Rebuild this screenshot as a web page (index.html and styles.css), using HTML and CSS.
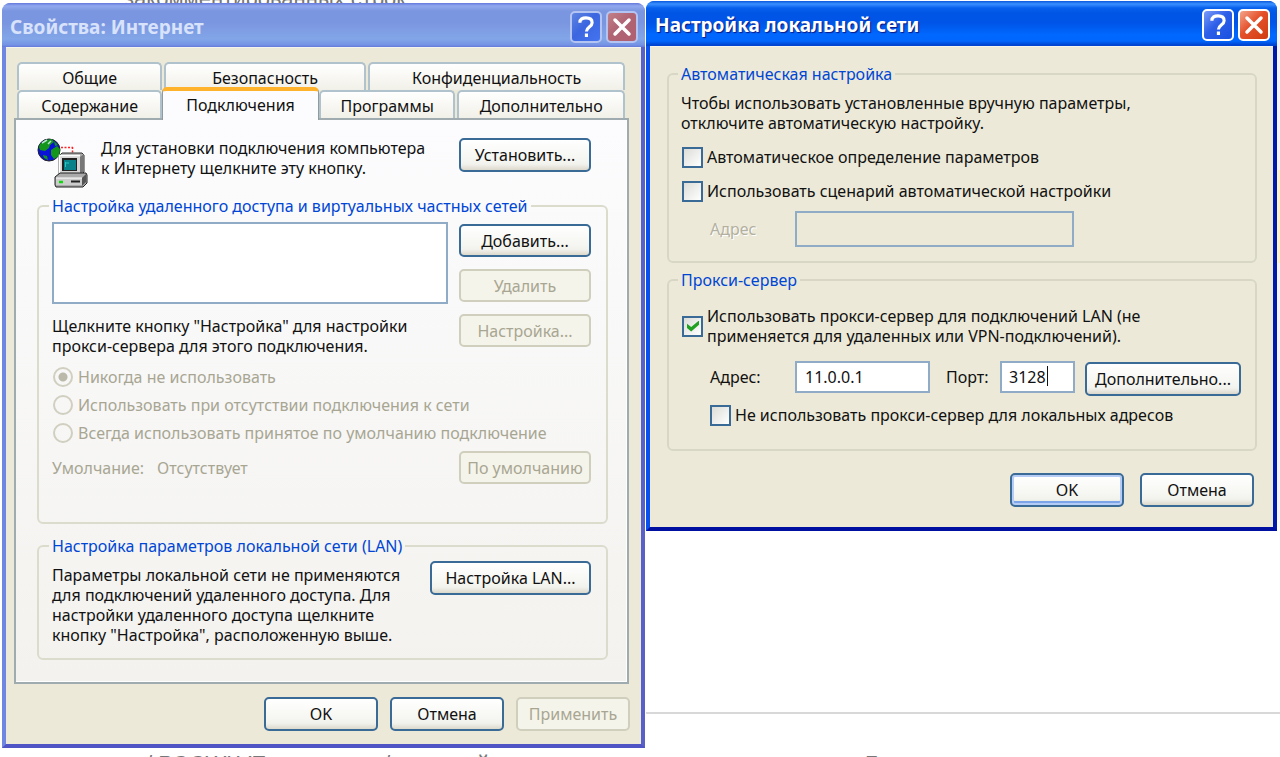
FILE: index.html
```html
<!DOCTYPE html>
<html lang="ru">
<head>
<meta charset="utf-8">
<title>Свойства: Интернет</title>
<link rel="stylesheet" href="styles.css">
</head>
<body>
<div class="doc" aria-hidden="true">
  <p class="doc-top">закомментированных строк</p>
  <p class="doc-bottom"><span class="doc-a">/ РОСWLVE</span><span class="doc-b">/</span><span class="doc-c">й</span><span class="doc-d">Б</span></p>
  <div class="doc-edge"></div>
</div>
<main class="desktop">
  <section class="window inactive" aria-label="Свойства: Интернет">
    <header class="titlebar">
      <h1 class="title">Свойства: Интернет</h1>
      <button class="cap help" type="button" aria-label="Справка"><svg viewBox="0 0 32 32"><path d="M9 11C9 7 12 5.500 16 5.500s7 1.500 7 5.500c0 5-6.500 5-6.500 10M16.500 23.500v4" fill="none" stroke="#fff" stroke-width="3.600"/></svg></button>
      <button class="cap close" type="button" aria-label="Закрыть"><svg viewBox="0 0 32 32"><path d="M8 8l16 16M24 8l-16 16" fill="none" stroke="#fff" stroke-width="4" stroke-linecap="round"/></svg></button>
    </header>
    <div class="body props">
      <div class="tabs" role="tablist">
        <div class="tab-row">
          <button class="tab t-general" role="tab" type="button">Общие</button>
          <button class="tab t-security" role="tab" type="button">Безопасность</button>
          <button class="tab t-privacy" role="tab" type="button">Конфиденциальность</button>
        </div>
        <div class="tab-row">
          <button class="tab t-general" role="tab" type="button">Содержание</button>
          <button class="tab t-connect selected" role="tab" type="button" aria-selected="true">Подключения</button>
          <button class="tab t-programs" role="tab" type="button">Программы</button>
          <button class="tab t-advanced" role="tab" type="button">Дополнительно</button>
        </div>
      </div>
      <div class="panel" role="tabpanel">
        <div class="intro">
          <svg class="net-icon" viewBox="0 0 52 50" aria-hidden="true">
            <path d="M24 9.500h12M35.500 9v7" stroke="#f22" stroke-width="1.500" stroke-dasharray="2 1.500" fill="none"/>
            <circle cx="12" cy="12" r="11" fill="#0a12d8" stroke="#222" stroke-width="1"/>
            <path d="M3 6l5-4 7-1 2 3-4 3-1 3-4 3-5-1-1-3zM14 12l6-4 3 3-1 7-5 3-3-4zM6 17l4 1 1 4-4-2zM17 3l4 4-3 1z" fill="#14961d"/>
            <path d="M5 5l5-3M14 3l-3 3" stroke="#b6e4d0" stroke-width="1.500"/>
            <path d="M22 18l3-3h20l2 2v17l-4 4H22z" fill="#a9a9a9" stroke="#333"/>
            <path d="M43 19l4-3v17l-4 4z" fill="#777"/>
            <path d="M22 17.500h21v19H22z" fill="#d6d6d6"/>
            <path d="M22.500 37V17.500H43" fill="none" stroke="#fff" stroke-width="1.500"/>
            <path d="M25 20h15v13H25z" fill="#222"/>
            <path d="M27 22h12v10H27z" fill="#08828a"/>
            <path d="M28 25h4M28.500 24v5" stroke="#22c8c8" stroke-width="1"/>
            <path d="M18 39l5-4h26l1 2v8l-4 4H19l-1-2z" fill="#aaa" stroke="#222"/>
            <path d="M45 40l4-4v8l-4 4z" fill="#555"/>
            <path d="M19 40h26v7H19z" fill="#ccc"/>
            <path d="M19 40h26" stroke="#fff"/>
            <path d="M22 44h4" stroke="#12d812" stroke-width="2.500"/>
            <path d="M34 43.500h9" stroke="#222" stroke-width="2"/>
          </svg>
          <p>Для установки подключения компьютера<br>к Интернету щелкните эту кнопку.</p>
          <button class="btn" type="button">Установить...</button>
        </div>
        <fieldset class="group dial">
          <legend>Настройка удаленного доступа и виртуальных частных сетей</legend>
          <div class="split">
            <div class="stack">
              <div class="listbox" role="listbox" aria-label="Подключения" tabindex="0"></div>
              <p>Щелкните кнопку "Настройка" для настройки<br>прокси-сервера для этого подключения.</p>
            </div>
            <div class="stack side">
              <button class="btn" type="button">Добавить...</button>
              <button class="btn" type="button" disabled>Удалить</button>
              <button class="btn" type="button" disabled>Настройка...</button>
            </div>
          </div>
          <div class="radios">
            <label class="radio"><input type="radio" name="dial" checked disabled>Никогда не использовать</label>
            <label class="radio"><input type="radio" name="dial" disabled>Использовать при отсутствии подключения к сети</label>
            <label class="radio"><input type="radio" name="dial" disabled>Всегда использовать принятое по умолчанию подключение</label>
          </div>
          <div class="default-row">
            <span>Умолчание:</span><span class="default-value">Отсутствует</span>
            <button class="btn" type="button" disabled>По умолчанию</button>
          </div>
        </fieldset>
        <fieldset class="group lan">
          <legend>Настройка параметров локальной сети (LAN)</legend>
          <div class="lan-row">
            <p>Параметры локальной сети не применяются<br>для подключений удаленного доступа. Для<br>настройки удаленного доступа щелкните<br>кнопку "Настройка", расположенную выше.</p>
            <button class="btn wide" type="button">Настройка LAN...</button>
          </div>
        </fieldset>
      </div>
      <div class="actions">
        <button class="btn" type="button">OK</button>
        <button class="btn" type="button">Отмена</button>
        <button class="btn" type="button" disabled>Применить</button>
      </div>
    </div>
  </section>
  <div class="right">
    <section class="window active" aria-label="Настройка локальной сети">
      <header class="titlebar">
        <h2 class="title">Настройка локальной сети</h2>
        <button class="cap help" type="button" aria-label="Справка"><svg viewBox="0 0 32 32"><path d="M9 11C9 7 12 5.500 16 5.500s7 1.500 7 5.500c0 5-6.500 5-6.500 10M16.500 23.500v4" fill="none" stroke="#fff" stroke-width="3.600"/></svg></button>
        <button class="cap close" type="button" aria-label="Закрыть"><svg viewBox="0 0 32 32"><path d="M8 8l16 16M24 8l-16 16" fill="none" stroke="#fff" stroke-width="4" stroke-linecap="round"/></svg></button>
      </header>
      <div class="body network">
        <fieldset class="group auto">
          <legend>Автоматическая настройка</legend>
          <p>Чтобы использовать установленные вручную параметры,<br>отключите автоматическую настройку.</p>
          <label class="check"><input type="checkbox">Автоматическое определение параметров</label>
          <label class="check"><input type="checkbox">Использовать сценарий автоматической настройки</label>
          <div class="field-row">
            <label class="field-label off" for="script">Адрес</label>
            <input class="text script" id="script" type="text" disabled>
          </div>
        </fieldset>
        <fieldset class="group proxy">
          <legend>Прокси-сервер</legend>
          <label class="check"><input type="checkbox" checked><span>Использовать прокси-сервер для подключений LAN (не<br>применяется для удаленных или VPN-подключений).</span></label>
          <div class="field-row">
            <label class="field-label" for="addr">Адрес:</label>
            <input class="text addr" id="addr" type="text" value="11.0.0.1">
            <label class="port-label" for="port">Порт:</label>
            <span class="port-box"><input class="text port" id="port" type="text" value="3128"><i class="caret"></i></span>
            <button class="btn" type="button">Дополнительно...</button>
          </div>
          <label class="check local"><input type="checkbox">Не использовать прокси-сервер для локальных адресов</label>
        </fieldset>
        <div class="actions">
          <button class="btn default" type="button">OK</button>
          <button class="btn" type="button">Отмена</button>
        </div>
      </div>
    </section>
    <hr class="rule">
  </div>
</main>
</body>
</html>
```
FILE: styles.css
```css
* { box-sizing: border-box; }

body {
  margin: 0;
  background: #fff;
  color: #111;
  font: 16px/20px "Noto Sans", "DejaVu Sans Condensed", sans-serif;
  overflow-x: hidden;
}

p, h1, h2 { margin: 0; }
button, input { font: inherit; color: inherit; }

/* document page behind the windows */
.doc {
  position: absolute;
  inset: 0;
  z-index: -1;
  overflow: hidden;
  color: #777;
  font-family: "Liberation Sans", Arial, sans-serif;
  font-size: 22px;
}
.doc-top {
  position: absolute;
  top: -11px;
  left: 124px;
}
.doc-bottom {
  position: absolute;
  left: 146px;
  right: 0;
  bottom: -17px;
  height: 20px;
  display: flex;
}
.doc-a { flex: 0 0 238px; }
.doc-b { flex: 0 0 93px; }
.doc-c { flex: 0 0 388px; }
.doc-edge {
  position: absolute;
  right: 0;
  top: 10px;
  width: 4px;
  height: 510px;
  background: linear-gradient(#f4f4fa 160px, #fdf3c4 160px, #fdf3c4 253px, #f4f4fa 253px);
}

.desktop {
  display: grid;
  grid-template-columns: 643fr 634fr;
  gap: 1px;
  padding: 1px 0 0 2px;
}

/* window frame */
.window {
  border: 4px solid;
  border-top: 0;
  border-radius: 9px 9px 0 0;
}
.inactive {
  margin-top: 2px;
  border-color: #5f70d8 #5960c8 #4f55c4 #6f87e0;
  background: #5f70d8;
}
.active {
  border-color: #0a44dc #0019a8 #0010a0 #0a50ec;
  background: #0a50ec;
}
.titlebar {
  display: flex;
  align-items: center;
  gap: 4px;
  margin: 0 -4px;
  padding: 3px 7px 0 8px;
  height: 44px;
  border-radius: 8px 8px 0 0;
}
.inactive .titlebar {
  background: linear-gradient(#6579dc 0, #91a9ee 3px, #7b96e0 8px, #7b96e0 20px, #82a6e8 36px, #7492e4 42px, #6478d8 44px);
}
.active .titlebar {
  height: 45px;
  padding-left: 9px;
  background: linear-gradient(#0a58dc 0, #3a90ff 3px, #0860ec 7px, #0055e5 12px, #0055e8 22px, #0068ff 34px, #0066fc 40px, #0044d0 44px);
}
.title {
  flex: 1;
  font: bold 19px/24px "Noto Sans", sans-serif;
  color: #d8e2fa;
}
.active .title {
  color: #fff;
  text-shadow: 1px 1px 1px #0a1883;
}
.cap {
  width: 32px;
  height: 32px;
  padding: 0;
  border: 2px solid #fff;
  border-radius: 5px;
}
.cap svg { display: block; width: 28px; height: 28px; }
.help { background: linear-gradient(135deg, #7b9cf8, #2d5fe8 45%, #1a50e0); }
.close { background: linear-gradient(135deg, #f4a58c, #e4502a 45%, #d03c10); }
.inactive .cap { border-color: #b4c4f2; }
.inactive .help { background: linear-gradient(135deg, #5f84e0, #3c66e0 45%, #4474f0); }
.inactive .close { background: linear-gradient(135deg, #c08088, #b06474 45%, #b06070); }

.body { background: #ece9d8; }

/* tabs */
.props { padding: 14px 12px 13px 8px; border-top: 1px solid #f4f3ec; }
.tabs { padding: 0 4px 0 3px; }
.tab-row { display: flex; gap: 2px; height: 28px; }
.tab {
  min-width: 0;
  height: 28px;
  padding: 2px 0 0;
  border: 2px solid #b0c2cc;
  border-bottom: 0;
  border-radius: 5px 5px 0 0;
  background: linear-gradient(#fff, #f1f0e8);
}
.t-general { flex: 144 1 0; }
.t-security { flex: 202 1 0; }
.t-privacy { flex: 258 1 0; }
.t-connect { flex: 158 1 0; }
.t-programs { flex: 135 1 0; }
.t-advanced { flex: 167 1 0; }
.tab.selected {
  position: relative;
  z-index: 1;
  height: 33px;
  margin: -3px -2px 0;
  padding-bottom: 3px;
  border: 0 solid #919b9c;
  border-width: 4px 1px 0;
  border-top-color: #ffb32c;
  background: #fcfcfe;
}
.panel {
  padding: 18px 19px 22px 21px;
  border: 2px solid #a0abb0;
  box-shadow: inset -1px -1px #fff;
  background: linear-gradient(#fcfcfe, #f3f2ee);
}

.intro {
  display: grid;
  grid-template-columns: 52px 1fr 132px;
  gap: 12px;
  padding-right: 17px;
  height: 50px;
  align-items: start;
}
.intro p { white-space: nowrap; }
.net-icon { width: 52px; height: 50px; }

/* group boxes */
.group {
  min-width: 0;
  margin: 8px 0 0;
  padding: 0 16px 0 14px;
  border: 2px solid #dcdccc;
  border-radius: 6px;
}
.group legend {
  margin-left: -3px;
  padding: 0 3px;
  color: #0046d5;
}
.dial { padding: 6px 15px 38px 13px; }
.lan { margin-top: 12px; padding: 5px 15px 13px 13px; }
.split {
  display: grid;
  grid-template-columns: 1fr 132px;
  gap: 11px;
}
.stack { display: flex; flex-direction: column; gap: 12px; }
.side { padding-top: 2px; }
.listbox {
  height: 82px;
  border: 2px solid #8fabc6;
  background: #fff;
}

.btn {
  height: 34px;
  padding: 0;
  border: 2px solid #3a6a96;
  border-radius: 5px;
  background: linear-gradient(#fff, #f3f3ee 80%, #dcd8cc);
  white-space: nowrap;
}
.stack .btn, .default-row .btn { height: 33px; }
.btn:disabled {
  border-color: #d0cfbe;
  background: #f5f4ea;
  color: #a8a693;
}
.btn.default { box-shadow: inset 0 0 0 2px #b4ccf6, inset 0 -4px #7ea4e8; }

.radios { margin-top: 7px; color: #a8a693; }
.radio { display: flex; align-items: center; gap: 5px; height: 28px; }
.radio input {
  appearance: none;
  flex: none;
  width: 20px;
  height: 20px;
  margin: 0 0 0 1px;
  border: 2px solid #d0cfc0;
  border-radius: 50%;
}
.radio input:checked { background: radial-gradient(#bbb9aa 4px, transparent 5px); }
.default-row {
  display: flex;
  align-items: center;
  gap: 13px;
  margin-top: 4px;
  color: #a8a693;
}
.default-value { flex: 1; }
.default-row .btn { width: 132px; }

.lan-row { display: flex; justify-content: space-between; align-items: start; }
.lan-row p { padding-top: 4px; white-space: nowrap; }
.wide { width: 161px; }

.actions { display: flex; justify-content: flex-end; gap: 12px; }
.actions .btn { width: 114px; }
.props .actions { margin-right: -1px; padding-top: 13px; }

/* LAN settings window */
.network { padding: 17px 16px 20px 17px; border-top: 1px solid #f4f3ec; }
.network .group { margin: 0; border-color: #d8d7c5; }
.network .auto { padding: 9px 14px 14px 12px; }
.network .proxy { margin-top: 7px; padding: 16px 14px 17px 12px; }
.check { display: flex; align-items: center; gap: 4px; min-height: 34px; }
.auto p { margin-bottom: 7px; }
.check input {
  position: relative;
  appearance: none;
  flex: none;
  width: 21px;
  height: 21px;
  margin: 0 0 0 1px;
  border: 2px solid #3a6a96;
  background: linear-gradient(135deg, #dcdcd8, #fff);
}
.check input:checked::before {
  content: "";
  position: absolute;
  inset: 3px 2px 3px 3px;
  background: #21a121;
  clip-path: polygon(0 30%, 35% 60%, 100% 0, 100% 38%, 35% 100%, 0 68%);
}
.field-row { display: flex; padding-left: 29px; }
.auto .field-row { padding-top: 3px; }
.field-label { flex: none; width: 85px; line-height: 36px; }
.off { color: #b3b09f; text-shadow: 1px 1px #fff; }
.text {
  height: 32px;
  padding: 0 8px;
  border: 2px solid #8fabc6;
  border-radius: 0;
  background: #fff;
}
.text:disabled { background: transparent; }
.script { flex: 0 1 279px; min-width: 0; height: 36px; }
.proxy .field-row { padding-top: 15px; }
.proxy .field-label, .port-label { line-height: 32px; }
.addr { flex: 0 1 135px; min-width: 0; }
.port-label { flex: none; width: 54px; margin-left: 16px; }
.port-box { position: relative; flex: none; width: 75px; height: 32px; }
.port { width: 100%; padding-left: 7px; }
.caret {
  position: absolute;
  left: 47px;
  top: 5px;
  width: 1px;
  height: 20px;
  background: #111;
}
.proxy .field-row .btn { flex: none; width: 156px; margin: 1px 0 -1px 10px; }
.local { margin: 3px 0 0 28px; }
.network .actions { gap: 16px; padding: 22px 3px 0 0; }

.right { display: flex; flex-direction: column; }
.right .window { margin-right: 3px; }
.rule {
  width: 100%;
  margin: auto 0 34px;
  border: 0;
  border-top: 2px solid #d8d8d8;
}
```
